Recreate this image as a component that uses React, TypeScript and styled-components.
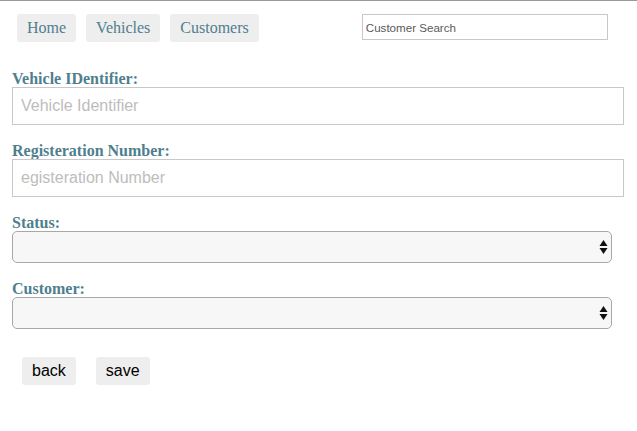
import React from "react";
import styled, { createGlobalStyle } from "styled-components";

const Global = createGlobalStyle`
  html, body { margin: 0; padding: 0; background: #fff; }
  body { font-family: "Liberation Serif", "Times New Roman", serif; }
  * { box-sizing: border-box; }
`;

const Page = styled.div`
  border-top: 1px solid #9a9a9a;
  width: 637px;
  min-height: 430px;
  padding: 13px 0 0 12px;
`;

const TopBar = styled.div`
  display: flex;
  align-items: flex-start;
  height: 56px;
`;

const Nav = styled.nav`
  display: flex;
  gap: 10px;
  padding-left: 5px;
`;

const NavButton = styled.button`
  height: 28px;
  padding: 0 10px;
  border: none;
  border-radius: 3px;
  background: #eeeeee;
  color: #4f7f8e;
  font-family: "Liberation Serif", "Times New Roman", serif;
  font-size: 16px;
  cursor: pointer;
`;

const Search = styled.input`
  margin-left: 103px;
  width: 246px;
  height: 26px;
  border: 1px solid #c8c8c8;
  padding: 0 3px;
  font-family: "Liberation Sans", Arial, sans-serif;
  font-size: 11.6px;
  color: #555;
  outline: none;
  &::placeholder { color: #5a5a5a; }
`;

const Form = styled.form`
  display: flex;
  flex-direction: column;
`;

const Field = styled.div<{ $gap: number }>`
  display: flex;
  flex-direction: column;
  margin-bottom: ${(p) => p.$gap}px;
`;

const Label = styled.label`
  font-family: "Liberation Serif", "Times New Roman", serif;
  font-weight: bold;
  font-size: 16px;
  line-height: 17px;
  color: #4f7f8e;
`;

const TextInput = styled.input`
  width: 612px;
  height: 38px;
  border: 1px solid #c8c8c8;
  padding: 0 8px;
  font-family: "Liberation Sans", Arial, sans-serif;
  font-size: 16px;
  color: #333;
  outline: none;
  &::placeholder { color: #bdbdbd; }
`;

const SelectWrap = styled.div`
  position: relative;
  width: 600px;
  height: 32px;
`;

const Select = styled.select`
  appearance: none;
  width: 100%;
  height: 100%;
  border: 1px solid #a8a8a8;
  border-radius: 5px;
  background: #f7f7f7;
  font-family: "Liberation Sans", Arial, sans-serif;
  font-size: 14px;
  outline: none;
`;

const Arrows = styled.svg`
  position: absolute;
  right: 4px;
  top: 9px;
  pointer-events: none;
`;

const Actions = styled.div`
  display: flex;
  gap: 20px;
  padding-left: 10px;
  margin-top: 28px;
`;

const ActionButton = styled.button`
  height: 28px;
  padding: 0 10px;
  border: none;
  border-radius: 3px;
  background: #eeeeee;
  color: #000;
  font-family: "Liberation Sans", Arial, sans-serif;
  font-size: 16px;
`;

const SelectArrows = () => (
  <Arrows width="9" height="14" viewBox="0 0 9 14">
    <polygon points="4.5,0 8.5,6 0.5,6" fill="#111" />
    <polygon points="0.5,8 8.5,8 4.5,14" fill="#111" />
  </Arrows>
);

export default function App() {
  return (
    <>
      <Global />
      <Page>
        <TopBar>
          <Nav>
            <NavButton type="button">Home</NavButton>
            <NavButton type="button">Vehicles</NavButton>
            <NavButton type="button">Customers</NavButton>
          </Nav>
          <Search placeholder="Customer Search" />
        </TopBar>
        <Form>
          <Field $gap={17}>
            <Label>Vehicle IDentifier:</Label>
            <TextInput placeholder="Vehicle Identifier" />
          </Field>
          <Field $gap={17}>
            <Label>Registeration Number:</Label>
            <TextInput placeholder="egisteration Number" />
          </Field>
          <Field $gap={17}>
            <Label>Status:</Label>
            <SelectWrap>
              <Select />
              <SelectArrows />
            </SelectWrap>
          </Field>
          <Field $gap={0}>
            <Label>Customer:</Label>
            <SelectWrap>
              <Select />
              <SelectArrows />
            </SelectWrap>
          </Field>
          <Actions>
            <ActionButton type="button">back</ActionButton>
            <ActionButton type="button">save</ActionButton>
          </Actions>
        </Form>
      </Page>
    </>
  );
}
